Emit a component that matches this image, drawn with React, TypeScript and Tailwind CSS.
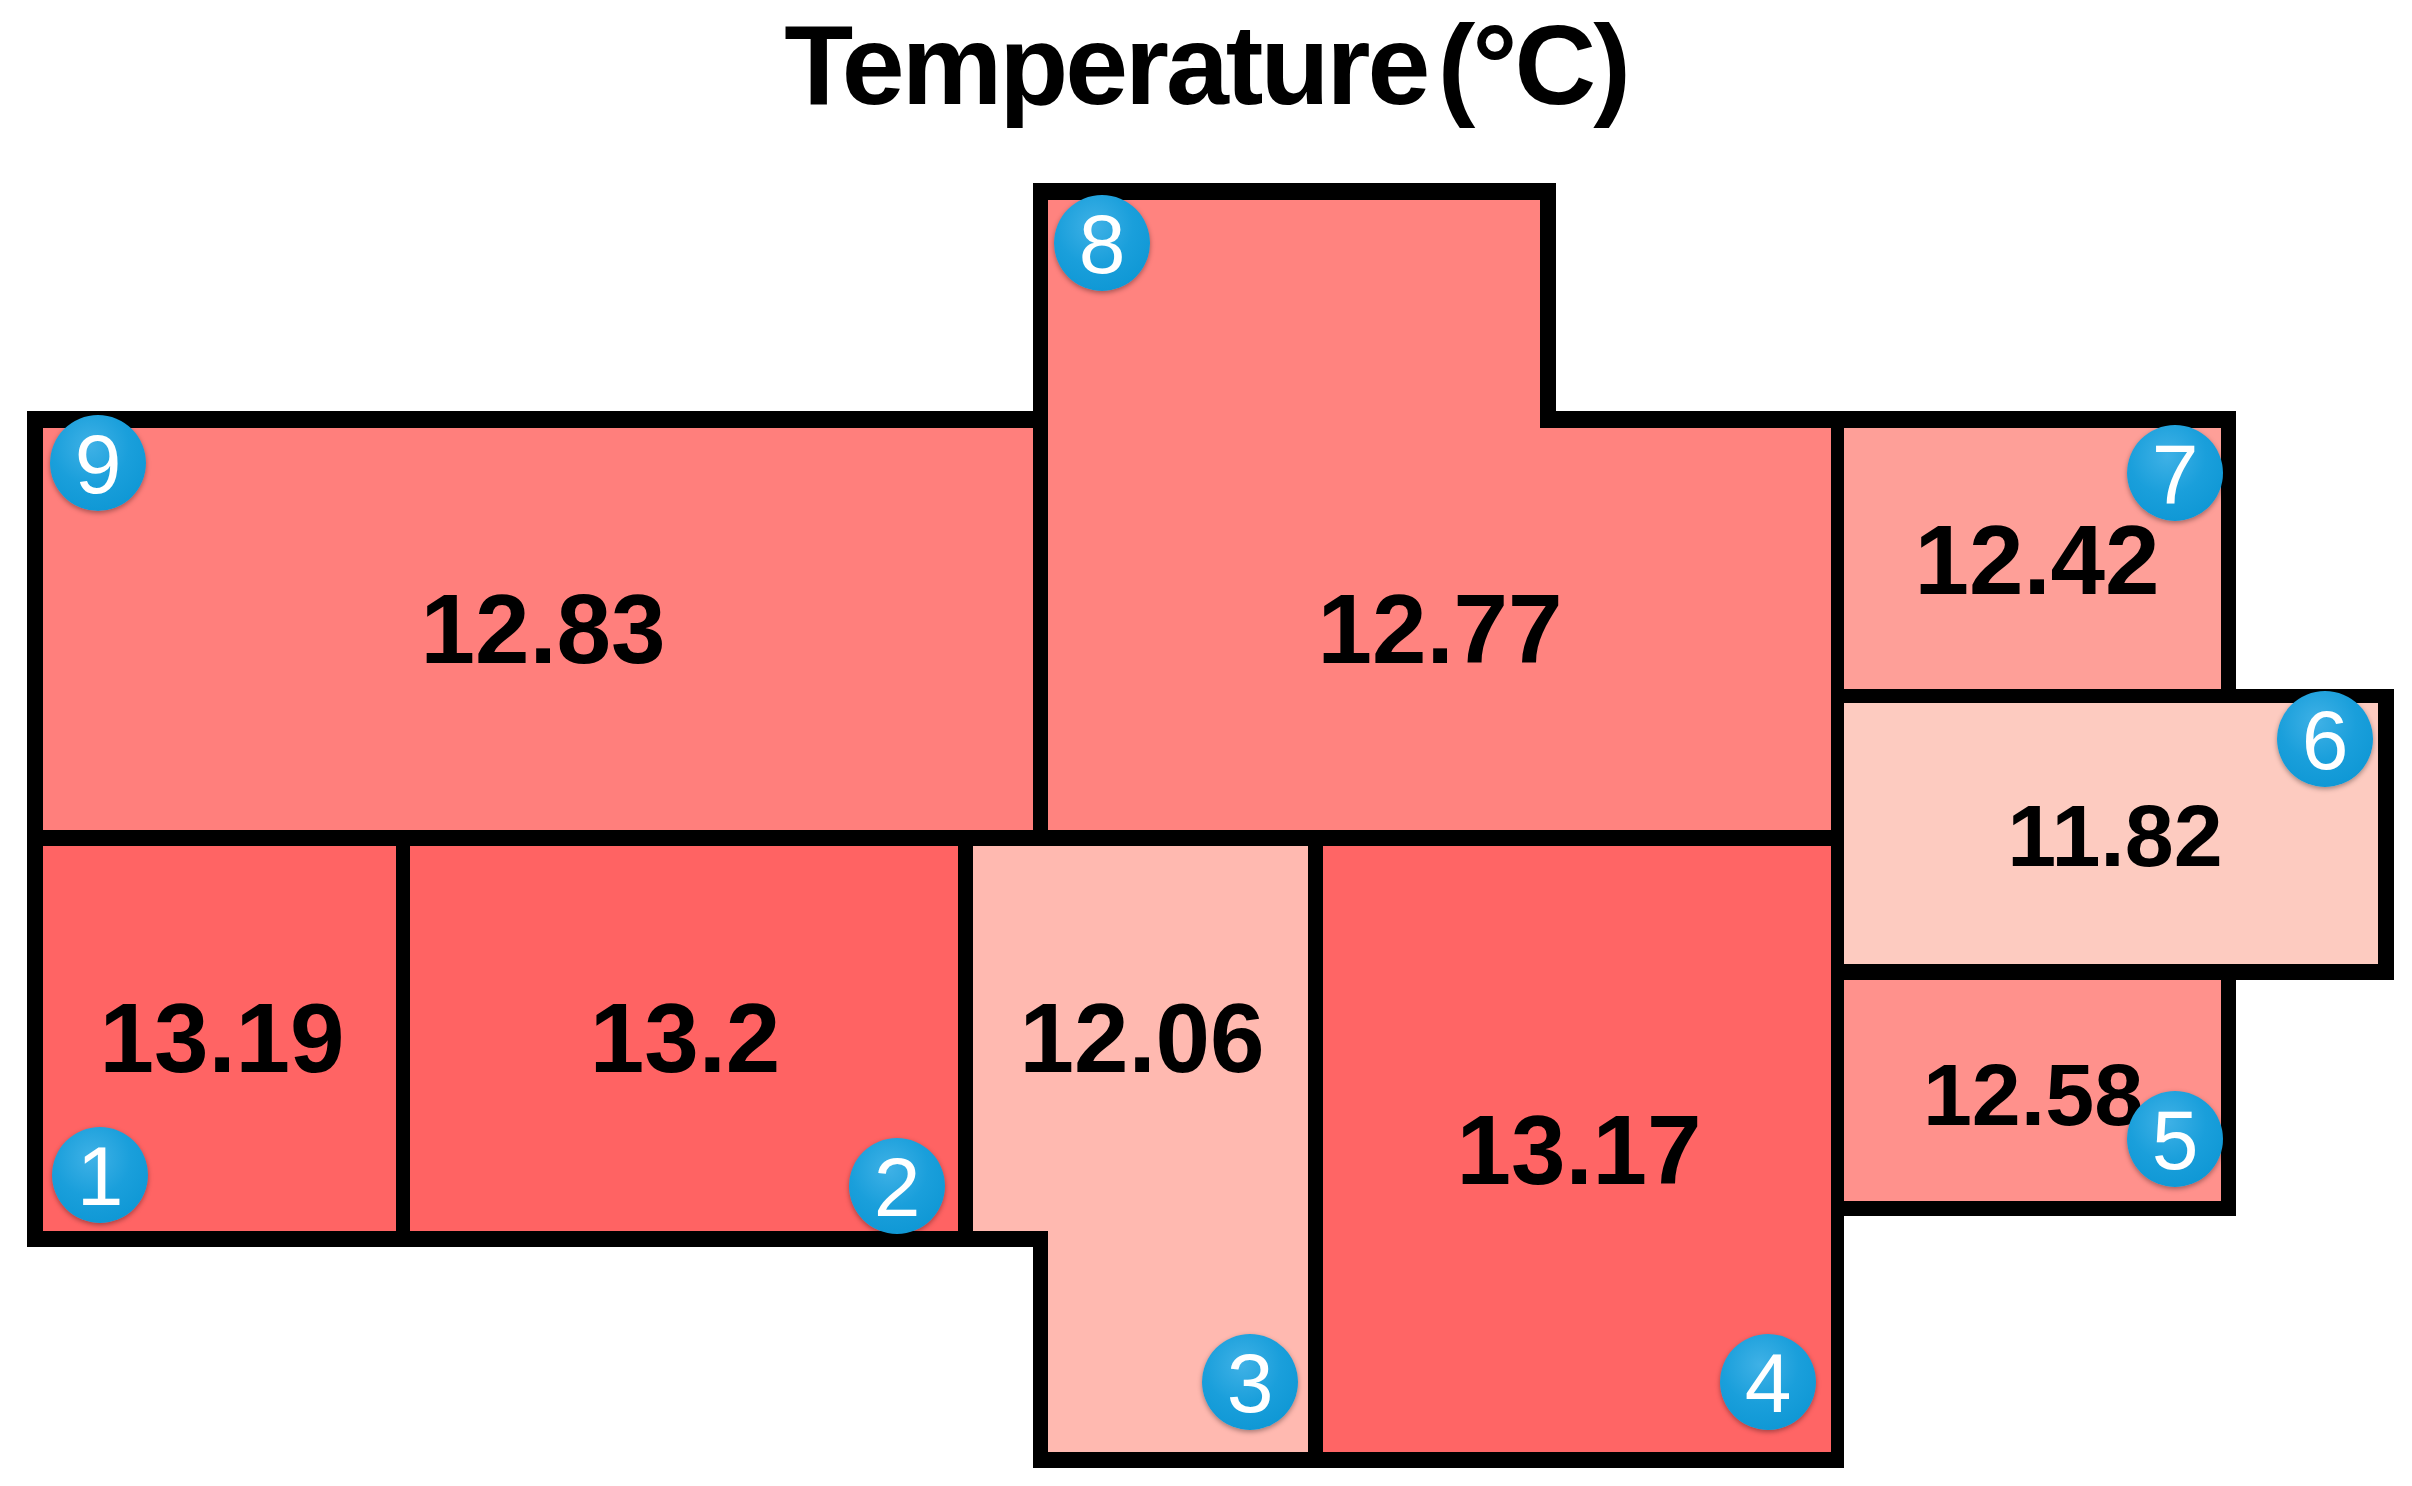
import React from "react";

// Floor plan, page coordinates (px). Canvas starts below the title.
const TOP = 150;

const walls =
	"27,411 1033,411 1033,183 1556,183 1556,411 2236,411 2236,689 2394,689 2394,980 2236,980 2236,1216 1844,1216 1844,1468 1033,1468 1033,1247 27,1247";

const rooms = [
	{ id: 9, fill: "#FF7F7C", points: "43,428 1033,428 1033,830 43,830" },
	{
		id: 8,
		fill: "#FF837F",
		points: "1048,200 1540,200 1540,428 1831,428 1831,830 1048,830",
	},
	{ id: 7, fill: "#FE9F98", points: "1844,428 2221,428 2221,689 1844,689" },
	{ id: 6, fill: "#FDCBC0", points: "1844,703 2378,703 2378,964 1844,964" },
	{ id: 5, fill: "#FF918C", points: "1844,980 2221,980 2221,1201 1844,1201" },
	{ id: 1, fill: "#FF6464", points: "43,846 396,846 396,1231 43,1231" },
	{ id: 2, fill: "#FF6363", points: "410,846 958,846 958,1231 410,1231" },
	{
		id: 3,
		fill: "#FFB9B0",
		points: "973,846 1308,846 1308,1452 1048,1452 1048,1231 973,1231",
	},
	{ id: 4, fill: "#FF6565", points: "1323,846 1831,846 1831,1452 1323,1452" },
];

const values = [
	{ text: "12.83", cx: 543, cy: 628, small: false },
	{ text: "12.77", cx: 1440, cy: 628, small: false },
	{ text: "12.42", cx: 2037, cy: 559, small: false },
	{ text: "11.82", cx: 2115, cy: 835, small: true },
	{ text: "12.58", cx: 2033, cy: 1094, small: true },
	{ text: "13.19", cx: 222, cy: 1037, small: false },
	{ text: "13.2", cx: 685, cy: 1037, small: false },
	{ text: "12.06", cx: 1142, cy: 1037, small: false },
	{ text: "13.17", cx: 1579, cy: 1149, small: false },
];

const badges = [
	{ n: 9, cx: 98, cy: 463 },
	{ n: 8, cx: 1102, cy: 243 },
	{ n: 7, cx: 2175, cy: 473 },
	{ n: 6, cx: 2325, cy: 739 },
	{ n: 5, cx: 2175, cy: 1139 },
	{ n: 1, cx: 100, cy: 1175 },
	{ n: 2, cx: 897, cy: 1186 },
	{ n: 3, cx: 1250, cy: 1382 },
	{ n: 4, cx: 1768, cy: 1382 },
];

function Badge({ n, cx, cy }: { n: number; cx: number; cy: number }) {
	return (
		<div
			className="absolute w-[96px] h-[96px] -translate-x-1/2 -translate-y-1/2 rounded-full flex items-center justify-center bg-[radial-gradient(circle_at_42%_32%,#3fb1e6_0%,#1a9fdb_45%,#0893d1_100%)] shadow-[0_2px_5px_rgba(0,0,0,0.35)]"
			style={{ left: cx, top: cy - TOP }}
		>
			<span className="font-['Liberation_Sans',Arial,sans-serif] text-[84px] leading-none text-white pt-[2px]">
				{n}
			</span>
		</div>
	);
}

export default function App() {
	return (
		<div className="w-[2412px] h-[1486px] bg-white flex flex-col overflow-hidden">
			{/* Title */}
			<div className="h-[150px] shrink-0 pt-[9px] flex justify-center">
				<h1 className="font-['Liberation_Sans',Arial,sans-serif] font-bold text-[113px] leading-none tracking-[-3px] [word-spacing:-18px] text-black">
					Temperature (°C)
				</h1>
			</div>

			{/* Floor plan */}
			<div className="relative flex-1">
				<svg
					width={2412}
					height={1336}
					viewBox={`0 ${TOP} 2412 1336`}
					className="block"
				>
					<polygon points={walls} fill="#000" />
					{rooms.map((r) => (
						<polygon key={r.id} points={r.points} fill={r.fill} />
					))}
				</svg>

				{values.map((v) => (
					<div
						key={v.text}
						className={`absolute -translate-x-1/2 -translate-y-1/2 font-['Liberation_Sans',Arial,sans-serif] font-bold leading-none text-black whitespace-nowrap ${
							v.small ? "text-[88px]" : "text-[98px]"
						}`}
						style={{ left: v.cx, top: v.cy - TOP + 1 }}
					>
						{v.text}
					</div>
				))}

				{badges.map((b) => (
					<Badge key={b.n} {...b} />
				))}
			</div>
		</div>
	);
}
